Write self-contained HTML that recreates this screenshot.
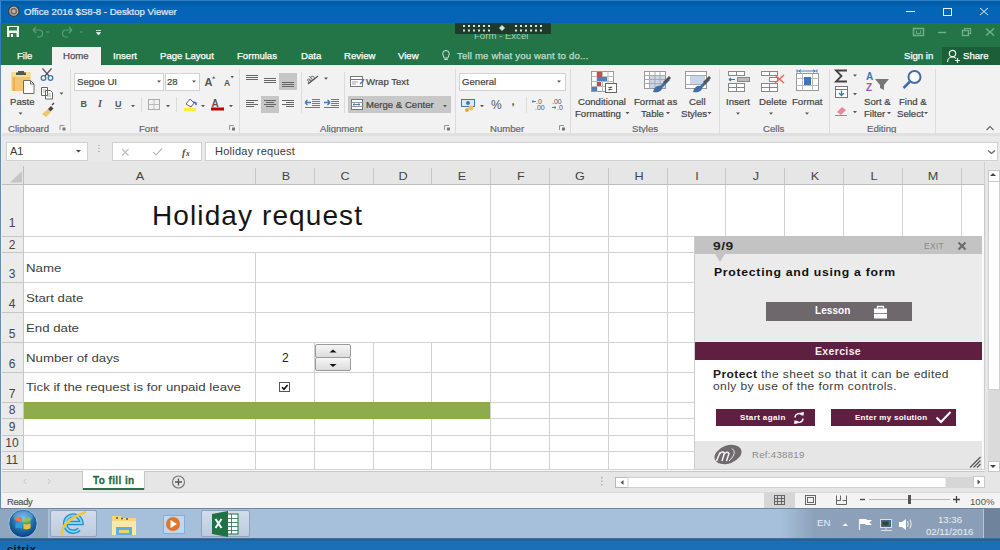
<!DOCTYPE html>
<html><head><meta charset="utf-8">
<style>
*{margin:0;padding:0;box-sizing:border-box}
html,body{width:1000px;height:550px;overflow:hidden;background:#fff;font-family:"Liberation Sans",sans-serif}
.a{position:absolute}
.t{position:absolute;white-space:nowrap;line-height:1}
svg{position:absolute;overflow:visible}
#title{left:0;top:0;width:1000px;height:23px;background:linear-gradient(#005ea8 0,#005ea8 3px,#0465b6 5px);border-top:1px solid #2f7fc8;border-left:1px solid #3f88d0}
#qat{left:0;top:23px;width:1000px;height:42px;background:#237548}
#ribbon{left:0;top:65px;width:1000px;height:68px;background:#f2f2f2}
#fbar{left:0;top:133px;width:1000px;height:29px;background:#e9e9e9;border-top:3px solid #e0e0e0}
#colhdr{left:0;top:162px;width:1000px;height:23px;background:#e6e6e6}
#grid{left:0;top:185px;width:1000px;height:286px;background:#fff}
#tabbar{left:0;top:471px;width:1000px;height:21px;background:#e6e6e6}
#status{left:0;top:493px;width:1000px;height:15px;background:#f3f3f3}
#taskbar{left:0;top:508px;width:1000px;height:30px;background:#a6c0dc}
#citrix{left:0;top:538px;width:1000px;height:12px;background:linear-gradient(#4f7fae 0,#2a5f95 1px,#2a5f95 2.5px,#2474b6 3px,#1470b6 4px,#1a6fb6 6px)}
.tab{color:#fff;font-size:9.6px;top:51.3px;-webkit-text-stroke:0.25px currentColor}
.rt{color:#444;font-size:9.6px;-webkit-text-stroke:0.2px currentColor}
.gl{color:#666;font-size:9.6px;top:124px;-webkit-text-stroke:0.2px currentColor}
.sep{position:absolute;width:1px;background:#dcdcdc;top:69px;height:64px}
.lbl{left:26px;font-size:10.5px;color:#404040;transform:scaleX(1.26);transform-origin:0 0}
.spin{left:315px;width:36px;height:14px;border:1px solid #9a9a9a;border-radius:2px;background:linear-gradient(#f6f6f6,#dcdcdc)}
</style></head><body>
<!-- TITLE BAR -->
<div id="title" class="a"></div>
<svg style="left:0;top:0" width="30" height="23"><circle cx="13.8" cy="11.2" r="5.2" fill="#b9b3ad" stroke="#3a3a3a" stroke-width="1.2"/><circle cx="13.8" cy="11.2" r="2.6" fill="none" stroke="#6b5e52" stroke-width="1.2"/></svg>
<div class="t" style="left:24px;top:6.6px;font-size:9.6px;color:#e2ecf8;-webkit-text-stroke:0.2px currentColor">Office 2016 $S8-8 - Desktop Viewer</div>
<svg style="left:900px;top:0" width="100" height="23">
 <line x1="6" y1="11.5" x2="15" y2="11.5" stroke="#e8f0fa" stroke-width="1"/>
 <rect x="43.5" y="8.5" width="8" height="7" fill="none" stroke="#e8f0fa" stroke-width="1"/>
 <path d="M80 8 L88 15 M88 8 L80 15" stroke="#e8f0fa" stroke-width="1"/>
</svg>

<!-- QAT + TABS -->
<div id="qat" class="a"></div>
<svg style="left:0;top:23px" width="110" height="20">
 <rect x="7" y="3" width="12" height="11" fill="#eef6f0"/>
 <rect x="9" y="4" width="8" height="3.5" fill="#2f7d52"/>
 <rect x="9.5" y="10" width="7" height="4" fill="#2f7d52"/>
 <rect x="11" y="11" width="2" height="3" fill="#eef6f0"/>
 <path d="M33 7 l3 -3 M33 7 l3 3 M33 7 h6 a3.5 3.5 0 0 1 0 7 h-2" fill="none" stroke="#5e9c78" stroke-width="1.2"/>
 <path d="M46 9 h3" stroke="#5e9c78" stroke-width="1"/>
 <path d="M72 7 l-3 -3 M72 7 l-3 3 M72 7 h-6 a3.5 3.5 0 0 0 0 7 h2" fill="none" stroke="#5e9c78" stroke-width="1.2"/>
 <path d="M80 9 h3" stroke="#5e9c78" stroke-width="1"/>
 <path d="M96 7.5 h5 M96.5 9.5 h4 l-2 2.5 z" fill="#e8f2ec" stroke="#e8f2ec" stroke-width="0.8"/>
</svg>
<div class="a" style="left:455px;top:23px;width:96px;height:11px;background:#1f3a2a;border-radius:1px"></div>
<div class="t" style="left:474px;top:31px;font-size:9.6px;color:#a6d2b4;clip-path:inset(3px 0 0 0)">Form - Excel</div>
<svg style="left:455px;top:23px" width="96" height="12">
 <g fill="#cfe3d6">
 <rect x="8" y="2" width="2" height="2"/><rect x="13" y="2" width="2" height="2"/><rect x="18" y="2" width="2" height="2"/><rect x="23" y="2" width="2" height="2"/><rect x="28" y="2" width="2" height="2"/><rect x="33" y="2" width="2" height="2"/>
 <rect x="8" y="6.5" width="2" height="2"/><rect x="13" y="6.5" width="2" height="2"/><rect x="18" y="6.5" width="2" height="2"/><rect x="23" y="6.5" width="2" height="2"/><rect x="28" y="6.5" width="2" height="2"/><rect x="33" y="6.5" width="2" height="2"/>
 <rect x="60" y="2" width="2" height="2"/><rect x="65" y="2" width="2" height="2"/><rect x="70" y="2" width="2" height="2"/><rect x="75" y="2" width="2" height="2"/><rect x="80" y="2" width="2" height="2"/><rect x="85" y="2" width="2" height="2"/>
 <rect x="60" y="6.5" width="2" height="2"/><rect x="65" y="6.5" width="2" height="2"/><rect x="70" y="6.5" width="2" height="2"/><rect x="75" y="6.5" width="2" height="2"/><rect x="80" y="6.5" width="2" height="2"/><rect x="85" y="6.5" width="2" height="2"/>
 <path d="M47 2 l3 3 l-3 3 l-3 -3 z"/>
 </g>
</svg>
<svg style="left:900px;top:23px" width="100" height="20">
 <rect x="13.5" y="5.5" width="10" height="7" fill="none" stroke="#72b08a" stroke-width="1.5"/>
 <path d="M16.5 7.5 v3 h4 v-3" fill="none" stroke="#72b08a" stroke-width="1"/>
 <line x1="38" y1="9.5" x2="46" y2="9.5" stroke="#72b08a" stroke-width="1.4"/>
 <rect x="62.5" y="7.5" width="6" height="5" fill="none" stroke="#72b08a" stroke-width="1.4"/>
 <path d="M64.5 7.5 v-2 h6 v5 h-2" fill="none" stroke="#72b08a" stroke-width="1.2"/>
 <path d="M86 5.5 L94 12.5 M94 5.5 L86 12.5" stroke="#72b08a" stroke-width="1.5"/>
</svg>

<div class="a" style="left:52px;top:47px;width:49px;height:18px;background:#f2f2f2"></div>
<div class="t tab" style="left:17px">File</div>
<div class="t tab" style="left:63px;color:#505050">Home</div>
<div class="t tab" style="left:113px">Insert</div>
<div class="t tab" style="left:160px">Page Layout</div>
<div class="t tab" style="left:237px">Formulas</div>
<div class="t tab" style="left:301px">Data</div>
<div class="t tab" style="left:344px">Review</div>
<div class="t tab" style="left:398px">View</div>
<svg style="left:440px;top:47px" width="14" height="18">
 <path d="M6 3.5 a3.3 3.3 0 0 1 3.3 3.3 c0 1.8 -1.4 2.4 -1.4 4.2 h-3.8 c0 -1.8 -1.4 -2.4 -1.4 -4.2 a3.3 3.3 0 0 1 3.3 -3.3 z M4.3 12.5 h3.4" fill="none" stroke="#d6e8dc" stroke-width="1"/>
</svg>
<div class="t tab" style="left:457px;color:#c3dccb;letter-spacing:0.17px">Tell me what you want to do...</div>
<div class="t tab" style="left:904px">Sign in</div>
<div class="a" style="left:942px;top:47px;width:58px;height:18px;background:#1b5e38"></div>
<svg style="left:945px;top:47px" width="18" height="18">
 <circle cx="7.5" cy="6.5" r="3.2" fill="none" stroke="#e8f2ec" stroke-width="1.2"/>
 <path d="M2.5 15 c0 -3 2.2 -5 5 -5 c1.5 0 2.6 0.5 3.4 1.3" fill="none" stroke="#e8f2ec" stroke-width="1.2"/>
 <path d="M12.5 11 v5 M10 13.5 h5" stroke="#e8f2ec" stroke-width="1.2"/>
</svg>
<div class="t tab" style="left:963px">Share</div>

<!-- RIBBON -->
<div id="ribbon" class="a"></div>

<!-- CLIPBOARD -->
<svg style="left:0;top:65px" width="70" height="70">
 <rect x="11.5" y="8" width="19" height="18" fill="#f4c56e"/>
 <rect x="11.5" y="7" width="19" height="5" fill="#f7dc96"/>
 <rect x="13" y="12" width="2" height="14" fill="#eeb050"/>
 <path d="M16 10 h10 v-2.5 h-2 v-1.5 h-6 v1.5 h-2 z" fill="#555"/>
 <path d="M23.5 15.5 h7 l3.5 3.5 v9.5 h-10.5 z" fill="#fffdf5" stroke="#6d6d6d" stroke-width="1"/>
 <path d="M30.5 15.5 v3.5 h3.5" fill="none" stroke="#6d6d6d" stroke-width="1"/>
 <g fill="none" stroke="#3d77b8" stroke-width="1.3"><circle cx="43.5" cy="13" r="2.3"/><circle cx="50.5" cy="13" r="2.3"/></g>
 <path d="M45 11 L51.5 3.5 M49 11 L42.5 3.5" stroke="#555" stroke-width="1.2"/>
 <path d="M41.5 22.5 h6 v8 h-6 z M45.5 25.5 h5 l2 2 v6.5 h-7 z" fill="#fff" stroke="#666" stroke-width="1"/>
 <path d="M43 25 h3 M43 27 h3 M47 29 h4 M47 31 h4" stroke="#888" stroke-width="0.7"/>
 <path d="M59.5 27.5 h4 l-2 2.2 z" fill="#555"/>
 <path d="M42 49 l6 -5 l3 3 l-5 5 z" fill="#f0c66c"/>
 <path d="M48 44 l3 -3 l2.5 2.5 l-3 3 z" fill="#444"/>
 <path d="M52 40 l2 -2" stroke="#444" stroke-width="1.5"/>
 <path d="M18.5 47.5 h4 l-2 2.2 z" fill="#555"/>
 <path d="M60.0 65 V60.5 H64.5" fill="none" stroke="#8a8a8a" stroke-width="0.9"/><rect x="62.5" y="62.5" width="3" height="3" fill="#777"/>
</svg>
<div class="t rt" style="left:10px;top:97px">Paste</div>
<div class="t gl" style="left:8px">Clipboard</div>
<div class="sep" style="left:70px"></div>

<!-- FONT -->
<div class="a" style="left:74px;top:73px;width:90px;height:18px;background:#fff;border:1px solid #d2d2d2"></div>
<div class="t rt" style="left:77px;top:77px">Segoe UI</div>
<div class="a" style="left:165px;top:73px;width:35px;height:18px;background:#fff;border:1px solid #d2d2d2"></div>
<div class="t rt" style="left:167px;top:77px">28</div>
<svg style="left:70px;top:65px" width="170" height="70">
 <path d="M87 15.5 h4 l-2 2.2 z M122 15.5 h4 l-2 2.2 z" fill="#555"/>
 <text x="134.5" y="21" font-family="Liberation Sans" font-weight="700" font-size="11" fill="#555">A</text>
 <path d="M142 13.5 l1.7 -2.2 l1.7 2.2 z" fill="#555"/>
 <text x="154" y="21" font-family="Liberation Sans" font-weight="700" font-size="8.5" fill="#555">A</text>
 <path d="M160.5 11 h3.4 l-1.7 2.2 z" fill="#555"/>
 <text x="10.5" y="42" font-family="Liberation Sans" font-weight="700" font-size="9" fill="#555">B</text>
 <text x="28" y="42" font-family="Liberation Serif" font-style="italic" font-weight="700" font-size="10" fill="#555">I</text>
 <text x="45" y="41.5" font-family="Liberation Sans" font-weight="700" font-size="9" fill="#555">U</text>
 <line x1="45" y1="43.5" x2="51.5" y2="43.5" stroke="#888" stroke-width="1"/>
 <path d="M61 40 h4 l-2 2.2 z M96 40 h4 l-2 2.2 z M131 40 h4 l-2 2.2 z M159 40 h4 l-2 2.2 z" fill="#555"/>
 <line x1="71.5" y1="32" x2="71.5" y2="47" stroke="#dcdcdc"/>
 <line x1="106.5" y1="32" x2="106.5" y2="47" stroke="#dcdcdc"/>
 <rect x="78.5" y="34.5" width="11" height="10" fill="none" stroke="#aaa" stroke-width="1"/>
 <path d="M84 34.5 v10 M78.5 39.5 h11" stroke="#bbb" stroke-width="1"/>
 <rect x="114" y="43" width="12" height="3" fill="#ffeb3b"/>
 <path d="M116 39 l4 -5 l4 4 l-3 4 z" fill="#fff" stroke="#666" stroke-width="1"/>
 <path d="M123 37 l3 1 v2" fill="none" stroke="#3a63c9" stroke-width="1.5"/>
 <rect x="141" y="42.5" width="13" height="3" fill="#c00000"/>
 <text x="141.5" y="42" font-family="Liberation Sans" font-weight="700" font-size="10" fill="#555">A</text>
 <path d="M159.5 65 V60.5 H164.0" fill="none" stroke="#8a8a8a" stroke-width="0.9"/><rect x="162.0" y="62.5" width="3" height="3" fill="#777"/>
</svg>
<div class="t gl" style="left:139px">Font</div>
<div class="sep" style="left:239px"></div>

<!-- ALIGNMENT -->
<div class="a" style="left:279px;top:73px;width:18px;height:17px;background:#c6c6c6"></div>
<div class="a" style="left:261px;top:96px;width:18px;height:17px;background:#c6c6c6"></div>
<div class="a" style="left:348px;top:96px;width:103px;height:17px;background:#c8c8c8"></div>
<svg style="left:240px;top:65px" width="220" height="70">
 <g stroke="#666" stroke-width="1">
 <path d="M6 10.5 h12 M6 12.5 h12 M6 14.5 h12"/>
 <path d="M24 13.5 h12 M24 15.5 h12 M24 17.5 h12"/>
 <path d="M42 17.5 h12 M42 19.5 h12 M42 21.5 h12"/>
 <path d="M6 35.5 h12 M6 37.5 h8 M6 39.5 h12 M6 41.5 h8"/>
 <path d="M24 35.5 h12 M26 37.5 h8 M24 39.5 h12 M26 41.5 h8"/>
 <path d="M42 35.5 h12 M46 37.5 h8 M42 39.5 h12 M46 41.5 h8"/>
 </g>
 <line x1="61.5" y1="7" x2="61.5" y2="48" stroke="#dcdcdc"/>
 <path d="M68 19 l10 -8" stroke="#555" stroke-width="1.3"/>
 <text x="66" y="17" font-family="Liberation Sans" font-size="8" fill="#555" transform="rotate(-40 70 14)">ab</text>
 <path d="M84 12.5 h4 l-2 2.2 z" fill="#555"/>
 <g stroke="#777" stroke-width="1"><path d="M72 34.5 h8 M72 36.5 h8 M72 38.5 h8 M72 40.5 h8 M65 42.5 h15"/><path d="M91 34.5 h8 M91 36.5 h8 M91 38.5 h8 M91 40.5 h8 M84 42.5 h15"/></g>
 <path d="M71 37.5 h-6 M65 37.5 l2.5 -2.5 M65 37.5 l2.5 2.5" stroke="#3d77b8" stroke-width="1.3" fill="none"/>
 <path d="M84 37.5 h6 M90 37.5 l-2.5 -2.5 M90 37.5 l-2.5 2.5" stroke="#3d77b8" stroke-width="1.3" fill="none"/>
 <line x1="104.5" y1="7" x2="104.5" y2="48" stroke="#dcdcdc"/>
 <rect x="110.5" y="11.5" width="12" height="10" fill="#fff" stroke="#777"/>
 <path d="M110.5 14.5 h12" stroke="#777"/>
 <path d="M112 17 h6 M112 19 h4" stroke="#888" stroke-width="0.8"/>
 <path d="M120 19 l3 -3 l1 -2" stroke="#3d77b8" stroke-width="1.3" fill="none"/>
 <rect x="111.5" y="34.5" width="11" height="10" fill="#fff" stroke="#777"/>
 <path d="M111.5 37.5 h11 M111.5 41.5 h11" stroke="#999"/>
 <path d="M113 39.5 h7 M113 39.5 l1.5 -1 M113 39.5 l1.5 1 M120 39.5 l-1.5 -1 M120 39.5 l-1.5 1" stroke="#3d77b8" stroke-width="0.9" fill="none"/>
 <path d="M203 40 h4 l-2 2.2 z" fill="#555"/>
 <path d="M204.5 65 V60.5 H209.0" fill="none" stroke="#8a8a8a" stroke-width="0.9"/><rect x="207.0" y="62.5" width="3" height="3" fill="#777"/>
</svg>
<div class="t rt" style="left:366px;top:77px">Wrap Text</div>
<div class="t rt" style="left:366px;top:100px">Merge &amp; Center</div>
<div class="t gl" style="left:320px">Alignment</div>
<div class="sep" style="left:455px"></div>

<!-- NUMBER -->
<div class="a" style="left:459px;top:73px;width:107px;height:18px;background:#fff;border:1px solid #d2d2d2"></div>
<div class="t rt" style="left:462px;top:77px">General</div>
<svg style="left:456px;top:65px" width="115" height="70">
 <path d="M101 15.5 h4 l-2 2.2 z M24 40 h4 l-2 2.2 z" fill="#555"/>
 <rect x="5.5" y="34.5" width="13" height="7" fill="#dfe9f5" stroke="#3d77b8"/>
 <circle cx="12" cy="38" r="2" fill="#3d77b8"/>
 <circle cx="15" cy="43" r="2.5" fill="#f0c060"/><circle cx="11" cy="45" r="2" fill="#e6a84a"/>
 <text x="35" y="44" font-family="Liberation Sans" font-size="12" fill="#555">%</text>
 <text x="55.5" y="40" font-family="Liberation Sans" font-weight="700" font-size="11" fill="#555">,</text>
 <line x1="70.5" y1="32" x2="70.5" y2="48" stroke="#dcdcdc"/>
 <text x="80" y="39" font-family="Liberation Sans" font-size="7" fill="#555">.0</text>
 <text x="79" y="45" font-family="Liberation Sans" font-size="7" fill="#555">.00</text>
 <path d="M76 36.5 h4 M76 36.5 l1.5 -1.2 M76 36.5 l1.5 1.2" stroke="#3d77b8" fill="none" stroke-width="0.9"/>
 <text x="96" y="39" font-family="Liberation Sans" font-size="7" fill="#555">.00</text>
 <text x="101" y="45" font-family="Liberation Sans" font-size="7" fill="#555">.0</text>
 <path d="M96 42.5 h4 M100 42.5 l-1.5 -1.2 M100 42.5 l-1.5 1.2" stroke="#3d77b8" fill="none" stroke-width="0.9"/>
 <path d="M103.5 65 V60.5 H108.0" fill="none" stroke="#8a8a8a" stroke-width="0.9"/><rect x="106.0" y="62.5" width="3" height="3" fill="#777"/>
</svg>
<div class="t gl" style="left:490px">Number</div>
<div class="sep" style="left:570px"></div>

<!-- STYLES -->
<svg style="left:571px;top:65px" width="150" height="70">
 <g fill="#fff" stroke="#999" stroke-width="1">
 <rect x="20.5" y="6.5" width="22" height="20"/>
 </g>
 <path d="M20.5 11.5 h22 M20.5 16.5 h22 M20.5 21.5 h22 M26 6.5 v20 M31.5 6.5 v20 M37 6.5 v20" stroke="#bbb" stroke-width="1"/>
 <rect x="26" y="7" width="5" height="5" fill="#c0504d"/>
 <rect x="26" y="12" width="10" height="4" fill="#4f81bd"/>
 <rect x="26" y="17" width="4" height="4" fill="#c0504d"/>
 <rect x="21" y="22" width="5" height="4" fill="#4f81bd"/>
 <rect x="34.5" y="18.5" width="11" height="9" fill="#fff" stroke="#666"/>
 <text x="37" y="26" font-family="Liberation Sans" font-size="8" fill="#444">≠</text>
 <rect x="73.5" y="6.5" width="21" height="17" fill="#fff" stroke="#999"/>
 <rect x="79" y="11" width="15" height="12" fill="#c9d5e8"/>
 <path d="M73.5 10.5 h21 M73.5 14.5 h21 M73.5 18.5 h21 M78.5 6.5 v17 M84 6.5 v17 M89 6.5 v17" stroke="#aaa" stroke-width="1"/>
 <path d="M83 24 c2 -3 4 -4 6 -3 l8 -8 l2 2 l-8 8 c0 3 -4 5 -9 4 z" fill="#3f6ea3"/>
 <path d="M92 17 l6 -6 l2 2 l-6 6 z" fill="#555"/>
 <rect x="114.5" y="6.5" width="21" height="17" fill="#fff" stroke="#999"/>
 <rect x="119" y="10" width="15" height="9" fill="#c9d5e8"/>
 <path d="M114.5 10.5 h21 M114.5 19.5 h21" stroke="#aaa" stroke-width="1"/>
 <path d="M123 24 c2 -3 4 -4 6 -3 l8 -8 l2 2 l-8 8 c0 3 -4 5 -9 4 z" fill="#3f6ea3"/>
 <path d="M132 17 l6 -6 l2 2 l-6 6 z" fill="#555"/>
 <path d="M54.5 47 h4 l-2 2.2 z M95 47 h4 l-2 2.2 z M136.5 47 h4 l-2 2.2 z" fill="#555"/>
</svg>
<div class="t rt" style="left:578px;top:97px">Conditional</div>
<div class="t rt" style="left:575px;top:109px">Formatting</div>
<div class="t rt" style="left:634px;top:97px">Format as</div>
<div class="t rt" style="left:641px;top:109px">Table</div>
<div class="t rt" style="left:689px;top:97px">Cell</div>
<div class="t rt" style="left:681px;top:109px">Styles</div>
<div class="t gl" style="left:632px">Styles</div>
<div class="sep" style="left:719px"></div>

<!-- CELLS -->
<svg style="left:720px;top:65px" width="110" height="70">
 <g fill="#fff" stroke="#888" stroke-width="1">
 <rect x="8.5" y="6.5" width="8" height="4"/><rect x="16.5" y="6.5" width="8" height="4"/>
 <rect x="8.5" y="18.5" width="8" height="4"/><rect x="8.5" y="22.5" width="8" height="4"/><rect x="16.5" y="18.5" width="8" height="4"/><rect x="16.5" y="22.5" width="8" height="4"/>
 </g>
 <rect x="17.5" y="12.5" width="12" height="4" fill="#bbb" stroke="#888"/>
 <path d="M9 14.5 h6 M9 14.5 l2 -1.5 M9 14.5 l2 1.5" stroke="#3d77b8" stroke-width="1.2" fill="none"/>
 <g fill="#fff" stroke="#888" stroke-width="1">
 <rect x="41.5" y="6.5" width="8" height="4"/><rect x="49.5" y="6.5" width="8" height="4"/>
 <rect x="41.5" y="18.5" width="8" height="4"/><rect x="41.5" y="22.5" width="8" height="4"/><rect x="49.5" y="18.5" width="8" height="4"/><rect x="49.5" y="22.5" width="8" height="4"/>
 <rect x="49.5" y="12.5" width="8" height="4"/>
 </g>
 <path d="M55 10 L64 18 M64 10 L55 18" stroke="#e06a5a" stroke-width="1.5"/>
 <rect x="76.5" y="8.5" width="22" height="17" fill="#fff" stroke="#999"/>
 <path d="M76.5 13.5 h22 M76.5 20.5 h22 M82.5 8.5 v17 M92.5 8.5 v17" stroke="#bbb"/>
 <rect x="84" y="12" width="7" height="8" fill="#3d77b8"/>
 <path d="M77 6 h20 M77 4.5 v3 M97 4.5 v3 M79 6 l2 -1.5 M79 6 l2 1.5 M95 6 l-2 -1.5 M95 6 l-2 1.5" stroke="#3d77b8" stroke-width="0.9" fill="none"/>
 <path d="M16 47.5 h4 l-2 2.2 z M49 47.5 h4 l-2 2.2 z M85 47.5 h4 l-2 2.2 z" fill="#555"/>
</svg>
<div class="t rt" style="left:726px;top:97px">Insert</div>
<div class="t rt" style="left:759px;top:97px">Delete</div>
<div class="t rt" style="left:792px;top:97px">Format</div>
<div class="t gl" style="left:763px">Cells</div>
<div class="sep" style="left:829px"></div>

<!-- EDITING -->
<svg style="left:830px;top:65px" width="110" height="70">
 <path d="M17 5.5 h-11 l5.5 5.5 l-5.5 5.5 h11" fill="none" stroke="#444" stroke-width="1.8"/>
 <path d="M23 9.5 h4 l-2 2.2 z M23 28 h4 l-2 2.2 z M23 46 h4 l-2 2.2 z" fill="#555"/>
 <rect x="5.5" y="21.5" width="12" height="11" fill="#fff" stroke="#777"/>
 <path d="M5.5 24.5 h12" stroke="#777"/>
 <path d="M11.5 25.5 v5 M9 28 l2.5 2.5 l2.5 -2.5" stroke="#3d77b8" stroke-width="1.3" fill="none"/>
 <path d="M7 47 l5 -5 l4 3 l-5 5 z" fill="#e88a9a"/>
 <path d="M5 50.5 h12" stroke="#e06a7a" stroke-width="1"/>
 <text x="36" y="15" font-family="Liberation Sans" font-weight="700" font-size="10" fill="#3d77b8">A</text>
 <text x="36" y="26" font-family="Liberation Sans" font-weight="700" font-size="10" fill="#9b59b6">Z</text>
 <path d="M45 14 h14 l-5 6 v5 l-4 -2 v-3 z" fill="#777"/>
 <circle cx="84.5" cy="12" r="6" fill="#fff" stroke="#3f6ea3" stroke-width="2"/>
 <path d="M80 16.5 l-6.5 6.5" stroke="#3f6ea3" stroke-width="2.5"/>
 <path d="M57 47 h4 l-2 2.2 z M94 47 h4 l-2 2.2 z" fill="#555"/>
</svg>
<div class="t rt" style="left:864px;top:97px">Sort &amp;</div>
<div class="t rt" style="left:864px;top:109px">Filter</div>
<div class="t rt" style="left:899px;top:97px">Find &amp;</div>
<div class="t rt" style="left:897px;top:109px">Select</div>
<div class="t gl" style="left:867px">Editing</div>
<div class="sep" style="left:935px"></div>
<svg style="left:980px;top:120px" width="20" height="14"><path d="M6.5 10 l3.5 -3.5 l3.5 3.5" fill="none" stroke="#666" stroke-width="1.1"/></svg>

<!-- FORMULA BAR -->
<div id="fbar" class="a"></div>
<div class="a" style="left:6px;top:142px;width:82px;height:19px;background:#fff;border:1px solid #d0d0d0"></div>
<div class="t" style="left:10px;top:146.2px;font-size:11px;color:#3a3a3a">A1</div>
<div class="a" style="left:112px;top:142px;width:90px;height:19px;background:#fff;border:1px solid #d0d0d0"></div>
<div class="a" style="left:205px;top:142px;width:793px;height:19px;background:#fff;border:1px solid #d0d0d0"></div>
<div class="t" style="left:215px;top:146.2px;font-size:11px;color:#3a3a3a;letter-spacing:0.25px">Holiday request</div>
<svg style="left:0;top:134px" width="1000" height="28">
 <path d="M76 16 h5 l-2.5 2.5 z" fill="#444"/>
 <g fill="#bbb"><rect x="98" y="11" width="2" height="1"/><rect x="98" y="14" width="2" height="1"/><rect x="98" y="17" width="2" height="1"/></g>
 <path d="M122 15 l6.5 6.5 M128.5 15 l-6.5 6.5" stroke="#bbb" stroke-width="1.1"/>
 <path d="M153 18 l3 3 l6 -6.5" fill="none" stroke="#bbb" stroke-width="1.2"/>
 <text x="182" y="21.5" font-family="Liberation Serif" font-style="italic" font-weight="700" font-size="10.5" fill="#555">f</text>
 <text x="186" y="22" font-family="Liberation Serif" font-style="italic" font-weight="700" font-size="7.5" fill="#444">x</text>
 <path d="M988 16.5 l3.5 3 l3.5 -3" fill="none" stroke="#666" stroke-width="1.3"/>
</svg>

<!-- COLUMN HEADER -->
<div id="colhdr" class="a"></div>
<svg style="left:0;top:162px" width="1000" height="24">
 <path d="M10 20.5 L22 9 V20.5 Z" fill="#c4c4c4"/>
 <line x1="0" y1="22.5" x2="985" y2="22.5" stroke="#bdbdbd"/>
 <line x1="23.5" y1="4" x2="23.5" y2="23" stroke="#bdbdbd"/>
 <line x1="255.5" y1="6" x2="255.5" y2="22" stroke="#c6c6c6"/>
 <line x1="314.5" y1="6" x2="314.5" y2="22" stroke="#c6c6c6"/>
 <line x1="373.5" y1="6" x2="373.5" y2="22" stroke="#c6c6c6"/>
 <line x1="431.5" y1="6" x2="431.5" y2="22" stroke="#c6c6c6"/>
 <line x1="490.5" y1="6" x2="490.5" y2="22" stroke="#c6c6c6"/>
 <line x1="549.5" y1="6" x2="549.5" y2="22" stroke="#c6c6c6"/>
 <line x1="608.5" y1="6" x2="608.5" y2="22" stroke="#c6c6c6"/>
 <line x1="667.5" y1="6" x2="667.5" y2="22" stroke="#c6c6c6"/>
 <line x1="725.5" y1="6" x2="725.5" y2="22" stroke="#c6c6c6"/>
 <line x1="784.5" y1="6" x2="784.5" y2="22" stroke="#c6c6c6"/>
 <line x1="843.5" y1="6" x2="843.5" y2="22" stroke="#c6c6c6"/>
 <line x1="902.5" y1="6" x2="902.5" y2="22" stroke="#c6c6c6"/>
 <line x1="961.5" y1="6" x2="961.5" y2="22" stroke="#c6c6c6"/>
 <line x1="984.5" y1="0" x2="984.5" y2="24" stroke="#d0d0d0"/>
</svg>
<div class="t" style="left:120.0px;width:40px;text-align:center;top:171.4px;font-size:11px;color:#444;transform:scaleX(1.15)">A</div>
<div class="t" style="left:265.5px;width:40px;text-align:center;top:171.4px;font-size:11px;color:#444;transform:scaleX(1.15)">B</div>
<div class="t" style="left:324.5px;width:40px;text-align:center;top:171.4px;font-size:11px;color:#444;transform:scaleX(1.15)">C</div>
<div class="t" style="left:383.0px;width:40px;text-align:center;top:171.4px;font-size:11px;color:#444;transform:scaleX(1.15)">D</div>
<div class="t" style="left:441.5px;width:40px;text-align:center;top:171.4px;font-size:11px;color:#444;transform:scaleX(1.15)">E</div>
<div class="t" style="left:500.5px;width:40px;text-align:center;top:171.4px;font-size:11px;color:#444;transform:scaleX(1.15)">F</div>
<div class="t" style="left:559.5px;width:40px;text-align:center;top:171.4px;font-size:11px;color:#444;transform:scaleX(1.15)">G</div>
<div class="t" style="left:618.5px;width:40px;text-align:center;top:171.4px;font-size:11px;color:#444;transform:scaleX(1.15)">H</div>
<div class="t" style="left:677.0px;width:40px;text-align:center;top:171.4px;font-size:11px;color:#444;transform:scaleX(1.15)">I</div>
<div class="t" style="left:735.5px;width:40px;text-align:center;top:171.4px;font-size:11px;color:#444;transform:scaleX(1.15)">J</div>
<div class="t" style="left:794.5px;width:40px;text-align:center;top:171.4px;font-size:11px;color:#444;transform:scaleX(1.15)">K</div>
<div class="t" style="left:853.5px;width:40px;text-align:center;top:171.4px;font-size:11px;color:#444;transform:scaleX(1.15)">L</div>
<div class="t" style="left:912.5px;width:40px;text-align:center;top:171.4px;font-size:11px;color:#444;transform:scaleX(1.15)">M</div>

<!-- GRID -->
<div id="grid" class="a"></div>
<div class="a" style="left:984px;top:185px;width:1px;height:286px;background:#c8c8c8"></div>
<div class="a" style="left:0;top:185px;width:24px;height:286px;background:#ebebeb"></div>
<svg style="left:0;top:0" width="1000" height="550">
 <g stroke="#d2d2d2" stroke-width="1">
  <line x1="24" y1="236.5" x2="984" y2="236.5"/>
  <line x1="24" y1="252.5" x2="984" y2="252.5"/>
  <line x1="24" y1="282.5" x2="984" y2="282.5"/>
  <line x1="24" y1="312.5" x2="984" y2="312.5"/>
  <line x1="24" y1="342.5" x2="984" y2="342.5"/>
  <line x1="24" y1="372.5" x2="984" y2="372.5"/>
  <line x1="24" y1="402.5" x2="984" y2="402.5"/>
  <line x1="24" y1="418.5" x2="984" y2="418.5"/>
  <line x1="24" y1="435.5" x2="984" y2="435.5"/>
  <line x1="24" y1="451.5" x2="984" y2="451.5"/>
  <line x1="24" y1="469.5" x2="984" y2="469.5"/>
  <line x1="490.5" y1="185" x2="490.5" y2="469"/>
  <line x1="549.5" y1="185" x2="549.5" y2="469"/>
  <line x1="608.5" y1="185" x2="608.5" y2="469"/>
  <line x1="667.5" y1="185" x2="667.5" y2="469"/>
  <line x1="725.5" y1="185" x2="725.5" y2="469"/>
  <line x1="784.5" y1="185" x2="784.5" y2="469"/>
  <line x1="843.5" y1="185" x2="843.5" y2="469"/>
  <line x1="902.5" y1="185" x2="902.5" y2="469"/>
  <line x1="961.5" y1="185" x2="961.5" y2="469"/>
  <line x1="255.5" y1="252" x2="255.5" y2="469"/>
  <line x1="314.5" y1="342" x2="314.5" y2="469"/>
  <line x1="373.5" y1="342" x2="373.5" y2="469"/>
  <line x1="431.5" y1="342" x2="431.5" y2="469"/>
 </g>
 <g stroke="#c6c6c6"><line x1="23.5" y1="185" x2="23.5" y2="471"/>
  <line x1="0" y1="236.5" x2="23" y2="236.5"/>
  <line x1="0" y1="252.5" x2="23" y2="252.5"/>
  <line x1="0" y1="282.5" x2="23" y2="282.5"/>
  <line x1="0" y1="312.5" x2="23" y2="312.5"/>
  <line x1="0" y1="342.5" x2="23" y2="342.5"/>
  <line x1="0" y1="372.5" x2="23" y2="372.5"/>
  <line x1="0" y1="402.5" x2="23" y2="402.5"/>
  <line x1="0" y1="418.5" x2="23" y2="418.5"/>
  <line x1="0" y1="435.5" x2="23" y2="435.5"/>
  <line x1="0" y1="451.5" x2="23" y2="451.5"/>
  <line x1="0" y1="469.5" x2="23" y2="469.5"/>
 </g>
</svg>
<div class="t" style="left:0;width:24px;text-align:center;top:216.84px;font-size:12px;color:#444">1</div>
<div class="t" style="left:0;width:24px;text-align:center;top:239.34px;font-size:12px;color:#444">2</div>
<div class="t" style="left:0;width:24px;text-align:center;top:268.34px;font-size:12px;color:#444">3</div>
<div class="t" style="left:0;width:24px;text-align:center;top:298.34px;font-size:12px;color:#444">4</div>
<div class="t" style="left:0;width:24px;text-align:center;top:328.34px;font-size:12px;color:#444">5</div>
<div class="t" style="left:0;width:24px;text-align:center;top:358.34px;font-size:12px;color:#444">6</div>
<div class="t" style="left:0;width:24px;text-align:center;top:387.84px;font-size:12px;color:#444">7</div>
<div class="t" style="left:0;width:24px;text-align:center;top:404.34px;font-size:12px;color:#444">8</div>
<div class="t" style="left:0;width:24px;text-align:center;top:420.84px;font-size:12px;color:#444">9</div>
<div class="t" style="left:0;width:24px;text-align:center;top:437.34px;font-size:12px;color:#444">10</div>
<div class="t" style="left:0;width:24px;text-align:center;top:453.84px;font-size:12px;color:#444">11</div>

<!-- CELL CONTENT -->
<div class="a" style="left:24px;top:402px;width:466px;height:17px;background:#8fac4c"></div>
<div class="t" style="left:152px;top:202.3px;font-size:28px;letter-spacing:1.1px;color:#151515">Holiday request</div>
<div class="t lbl" style="top:263.1px">Name</div>
<div class="t lbl" style="top:293.1px">Start date</div>
<div class="t lbl" style="top:323.1px">End date</div>
<div class="t lbl" style="top:352.6px">Number of days</div>
<div class="t lbl" style="top:382.3px">Tick if the request is for unpaid leave</div>
<div class="t" style="left:282px;top:351.6px;font-size:12px;color:#222">2</div>
<div class="a spin" style="top:344px"></div>
<div class="a spin" style="top:357px"></div>
<svg style="left:315px;top:344px" width="36" height="29">
 <path d="M14.5 8.5 h7 l-3.5 -3 z" fill="#111"/>
 <path d="M14.5 20 h7 l-3.5 3 z" fill="#111"/>
</svg>
<div class="a" style="left:279px;top:382px;width:11px;height:10px;border:1.5px solid #555;background:#fff"></div>
<svg style="left:279px;top:382px" width="12" height="11"><path d="M3 5.2 l2 2 l3.6 -4.2" fill="none" stroke="#111" stroke-width="1.6"/></svg>

<!-- LESSON PANEL -->
<div class="a" style="left:694px;top:236px;width:291px;height:234px;background:#fafafa;border:1px solid #cdcdcd;border-top:none"></div>
<div class="a" style="left:695px;top:236px;width:287px;height:18px;background:#c3c3c3"></div>
<div class="a" style="left:695px;top:254px;width:287px;height:88px;background:#ebebeb"></div>
<svg style="left:695px;top:254px" width="40" height="10"><path d="M20 0 h10 l-5 8 z" fill="#c3c3c3"/></svg>
<div class="t" style="left:712.5px;top:241.5px;font-size:10px;font-weight:700;color:#222;letter-spacing:0.4px;transform:scaleX(1.38);transform-origin:0 0">9/9</div>
<div class="t" style="left:924px;top:242px;font-size:8.5px;color:#8a8a8a;letter-spacing:0.3px">EXIT</div>
<svg style="left:955px;top:240px" width="14" height="12"><path d="M3.5 2.5 L10.5 9.5 M10.5 2.5 L3.5 9.5" stroke="#6a6a6a" stroke-width="2"/></svg>
<div class="t" style="left:714px;top:267.5px;font-size:10.2px;font-weight:700;color:#111;letter-spacing:0.6px;transform:scaleX(1.2);transform-origin:0 0">Protecting and using a form</div>
<div class="a" style="left:766px;top:302px;width:146px;height:19px;background:#6e686c"></div>
<div class="t" style="left:815px;top:305.8px;font-size:10px;font-weight:700;color:#fff;letter-spacing:0.05px">Lesson</div>
<svg style="left:872px;top:304px" width="18" height="16">
 <path d="M5.5 4.5 v-2 h6 v2" fill="none" stroke="#fff" stroke-width="1.3"/>
 <rect x="2" y="4.5" width="13" height="10" fill="#fff"/>
 <path d="M2 9.5 h13" stroke="#6e686c" stroke-width="0.8"/>
</svg>
<div class="a" style="left:695px;top:342px;width:287px;height:18px;background:#5f1f40"></div>
<div class="t" style="left:815px;top:345.5px;font-size:10.5px;font-weight:700;color:#f4eef1;letter-spacing:0.35px">Exercise</div>
<div class="a" style="left:695px;top:360px;width:287px;height:81px;background:#fff"></div>
<div class="t" style="left:713px;top:369px;font-size:10.2px;color:#3a3a3a;letter-spacing:0.35px;line-height:12.2px;transform:scaleX(1.18);transform-origin:0 0">
<b style="color:#1a1a1a">Protect</b> the sheet so that it can be edited<br>only by use of the form controls.</div>
<div class="a" style="left:716px;top:409px;width:99px;height:17px;background:#5f1f40"></div>
<div class="t" style="left:740px;top:413.7px;font-size:8px;font-weight:700;color:#fff;letter-spacing:0.4px">Start again</div>
<svg style="left:792px;top:411px" width="14" height="14">
 <path d="M3 6.5 a4 4 0 0 1 7 -2.5 M11 7.5 a4 4 0 0 1 -7 2.5" fill="none" stroke="#fff" stroke-width="1.5"/>
 <path d="M8.5 2 l2.5 2.5 l0.5 -3 z M5.5 12 l-2.5 -2.5 l-0.5 3 z" fill="#fff" stroke="#fff" stroke-width="0.8"/>
</svg>
<div class="a" style="left:831px;top:409px;width:125px;height:17px;background:#5f1f40"></div>
<div class="t" style="left:855px;top:413.7px;font-size:8px;font-weight:700;color:#fff;letter-spacing:0.28px">Enter my solution</div>
<svg style="left:935px;top:410px" width="18" height="16"><path d="M1.5 7.5 l4.5 4.5 l9.5 -10" fill="none" stroke="#fff" stroke-width="2"/></svg>
<div class="a" style="left:695px;top:441px;width:287px;height:28px;background:#e6e6e6"></div>
<svg style="left:712px;top:444px" width="32" height="22">
 <ellipse cx="16" cy="10.5" rx="14" ry="9" transform="rotate(-20 16 10.5)" fill="#6e6a6e"/>
 <path d="M4.5 17 L8 8.5 M7.5 10 q3 -3.5 5 -1 L10 17 M11.5 11 q3 -4.5 5.5 -1.5 L14.5 17" fill="none" stroke="#f4f4f4" stroke-width="1.5"/>
 <path d="M20 4.5 q6 4 -3 12.5" fill="none" stroke="#f4f4f4" stroke-width="0.9"/>
</svg>
<div class="t" style="left:752px;top:450px;font-size:9.6px;color:#8a8a8a;letter-spacing:0.3px">Ref:438819</div>
<svg style="left:968px;top:456px" width="14" height="12"><path d="M2 11.5 L12.5 1 M5.5 11.5 L12.5 4.5 M9 11.5 L12.5 8" stroke="#555" stroke-width="1.2"/></svg>

<!-- SHEET TABS -->
<div id="tabbar" class="a"></div>
<div class="a" style="left:0;top:470px;width:985px;height:2px;background:#f8f8f8;border-bottom:1px solid #c8c8c8"></div>
<div class="a" style="left:0;top:492px;width:1000px;height:1px;background:#d8d8d8"></div>
<div class="a" style="left:82px;top:471px;width:63px;height:19px;background:#fff;border-left:1px solid #c6c6c6;border-right:1px solid #c6c6c6"></div>
<div class="a" style="left:83px;top:487.5px;width:61px;height:2px;background:#2a6e4a"></div>
<div class="t" style="left:93px;top:476px;font-size:10px;font-weight:700;color:#276b47;letter-spacing:0.4px;-webkit-text-stroke:0.3px currentColor">To fill in</div>
<svg style="left:0;top:471px" width="1000" height="22">
 <path d="M26 8 l-2 2.5 l2 2.5 M48 8 l2 2.5 l-2 2.5" fill="none" stroke="#c4c4c4" stroke-width="1"/>
 <circle cx="178.5" cy="11" r="6" fill="none" stroke="#777" stroke-width="1.1"/>
 <path d="M178.5 7.5 v7 M175 11 h7" stroke="#555" stroke-width="1.3"/>
 <g fill="#b0b0b0"><rect x="601" y="6" width="1.5" height="1.5"/><rect x="601" y="9.5" width="1.5" height="1.5"/><rect x="601" y="13" width="1.5" height="1.5"/></g>
 <rect x="615.5" y="6.5" width="13" height="10" fill="#fff" stroke="#b8b8b8"/>
 <path d="M623.5 9 v5 l-3 -2.5 z" fill="#555"/>
 <rect x="628" y="6.5" width="318" height="10" fill="#fff" stroke="#d0d0d0"/>
 <rect x="946" y="6" width="27" height="11" fill="#d6d6d6"/>
 <rect x="973.5" y="5.5" width="11" height="11" fill="#fff" stroke="#c8c8c8"/>
 <path d="M977.5 8.5 v5 l3 -2.5 z" fill="#555"/>
</svg>

<!-- VERTICAL SCROLLBAR -->
<div class="a" style="left:985px;top:162px;width:15px;height:309px;background:#e6e6e6"></div>
<div class="a" style="left:988px;top:170px;width:12px;height:220px;background:#fff;border:1px solid #d0d0d0"></div>
<div class="a" style="left:988px;top:390px;width:12px;height:71px;background:#dadada"></div>
<div class="a" style="left:988px;top:170px;width:12px;height:12px;background:#fff;border:1px solid #c8c8c8"></div>
<div class="a" style="left:988px;top:461px;width:12px;height:11px;background:#fff;border:1px solid #c8c8c8"></div>
<svg style="left:985px;top:162px" width="15" height="312">
 <path d="M5 14 h6 l-3 -3 z" fill="#444"/>
 <path d="M5 303 h6 l-3 3 z" fill="#444"/>
</svg>

<!-- STATUS BAR -->
<div id="status" class="a"></div>
<div class="t" style="left:7px;top:496.8px;font-size:9.4px;color:#555;letter-spacing:-0.35px;-webkit-text-stroke:0.2px currentColor">Ready</div>
<div class="a" style="left:764px;top:493px;width:31px;height:15px;background:#d6d6d6"></div>
<svg style="left:0;top:492px" width="1000" height="16">
 <g fill="none" stroke="#666" stroke-width="1">
  <rect x="774.5" y="3.5" width="10" height="9"/><path d="M774.5 6.5 h10 M774.5 9.5 h10 M777.5 3.5 v9 M781.5 3.5 v9"/>
  <rect x="805.5" y="3.5" width="10" height="9"/><rect x="807.5" y="5.5" width="6" height="5"/>
  <path d="M836.5 3.5 v9 h10 v-9 M836.5 8.5 h4 v-5 M846.5 8.5 h-4"/>
 </g>
 <path d="M860 7.5 h5" stroke="#444" stroke-width="1.3"/>
 <path d="M869 7.5 h81" stroke="#b8b8b8" stroke-width="1"/>
 <rect x="908" y="3" width="3" height="9" fill="#555"/>
 <path d="M953 7.5 h7 M956.5 4 v7" stroke="#444" stroke-width="1.3"/>
</svg>
<div class="t" style="left:970px;top:496.5px;font-size:9.6px;color:#555">100%</div>

<!-- TASKBAR -->
<div id="taskbar" class="a"></div>
<div class="a" style="left:0;top:508px;width:1000px;height:1px;background:#6d87a3"></div>
<div class="a" style="left:0;top:509px;width:48px;height:29px;background:#8ea6c0"></div>
<div class="a" style="left:50px;top:510px;width:47px;height:27px;background:linear-gradient(#d3dcea,#bccbdd);border:1px solid #8fa3ba;border-radius:2px"></div>
<div class="a" style="left:201px;top:510px;width:49px;height:27px;background:linear-gradient(#d3dcea,#bccbdd);border:1px solid #8fa3ba;border-radius:2px"></div>
<div class="a" style="left:780px;top:509px;width:203px;height:29px;background:linear-gradient(90deg,#a6c0dc,#8da2ba 17%,#8a9fb7)"></div>
<div class="a" style="left:983px;top:509px;width:17px;height:29px;background:#6f849c;border-left:1px solid #b8c6d6"></div>
<svg style="left:0;top:508px" width="1000" height="30">
 <defs>
  <radialGradient id="orb" cx="50%" cy="35%" r="65%"><stop offset="0" stop-color="#5fb6e8"/><stop offset="0.6" stop-color="#1d6aa8"/><stop offset="1" stop-color="#0b3f73"/></radialGradient>
 </defs>
 <circle cx="23" cy="15.5" r="14.2" fill="url(#orb)" stroke="#a9cbe6" stroke-width="0.9"/>
 <path d="M15.5 9.5 q3 -1.5 6.5 0 v5 q-3.5 -1.5 -6.5 0 z" fill="#d9582e"/>
 <path d="M23.5 9.8 q3.5 1.5 7 -0.5 v5 q-3.5 2 -7 0.5 z" fill="#6fb33e"/>
 <path d="M15.5 15.5 q3 -1.5 6.5 0 v5 q-3.5 -1.5 -6.5 0 z" fill="#3a9ad8"/>
 <path d="M23.5 15.8 q3.5 1.5 7 -0.5 v5 q-3.5 2 -7 0.5 z" fill="#e9c23a"/>
 <ellipse cx="23" cy="8.5" rx="10" ry="5.5" fill="#fff" opacity="0.2"/>
 <path d="M65.5 15 h16 a8.2 8.2 0 1 0 -2.4 6.4" fill="none" stroke="#1f8fce" stroke-width="4.4"/>
 <path d="M65.5 15 h16 a8.2 8.2 0 1 0 -2.4 6.4" fill="none" stroke="#7fd3f3" stroke-width="1.8"/>
 <path d="M62 27 q-1.5 -14 24 -23" fill="none" stroke="#efc64c" stroke-width="2.8"/>
 <path d="M112 8 h9 l2 2 h13 v17 h-24 z" fill="#f4d678"/>
 <path d="M112 13 h24 v14 h-24 z" fill="#f9e9a8"/>
 <path d="M116 19 h16 v8 h-16 z" fill="#5bb0e0"/>
 <path d="M119 22 h10 v3 h-10 z" fill="#f2d070"/>
 <g fill="#555"><circle cx="117" cy="10" r="1"/><circle cx="122" cy="10.5" r="1"/><circle cx="127" cy="11" r="1"/></g>
 <rect x="163.5" y="7.5" width="21" height="18" fill="#bcd9f2" stroke="#7fb1dc" stroke-width="1"/>
 <circle cx="173" cy="16" r="7" fill="#e2752c"/>
 <path d="M170.5 12 v8 l6.5 -4 z" fill="#fff"/>
 <rect x="226" y="6" width="12" height="20" fill="#fff" stroke="#207245" stroke-width="1"/>
 <path d="M226 10.5 h12 M226 14.5 h12 M226 18.5 h12 M226 22.5 h12 M231.5 6 v20" stroke="#207245" stroke-width="0.8"/>
 <path d="M212 6 l16 -3 v26 l-16 -3 z" fill="#1f7244"/>
 <path d="M215.5 11 l6 9 M221.5 11 l-6 9" stroke="#fff" stroke-width="2"/>
 <text x="817" y="18" font-family="Liberation Sans" font-size="9.6" fill="#e8eef5">EN</text>
 <path d="M842.5 18 h5.5 l-2.75 -2.75 z" fill="#fff"/>
 <path d="M859.5 11 v11" stroke="#eee" stroke-width="1.2"/>
 <path d="M860 11 h6 l1 1 h5 l-2.5 2.5 l2.5 2.5 h-6 l-1 -1 h-5 z" fill="#fff"/>
 <rect x="880.5" y="11.5" width="11" height="8" fill="#4a6a8a" stroke="#e0e0e0"/>
 <rect x="882.5" y="13.5" width="6" height="4" fill="#2e4a2a"/>
 <path d="M881 22.5 h11 M886 19.5 v3" stroke="#e0e0e0" stroke-width="1"/>
 <path d="M899 14 h3 l4 -3 v11 l-4 -3 h-3 z" fill="#fff"/>
 <path d="M907.5 13 q1.5 3 0 6 M910 11.5 q2.5 4.5 0 9" fill="none" stroke="#eee" stroke-width="1"/>
 <text x="938" y="14.5" font-family="Liberation Sans" font-size="9.6" fill="#e8eef5">13:36</text>
 <text x="926" y="26.8" font-family="Liberation Sans" font-size="9.6" fill="#e8eef5">02/11/2016</text>
</svg>

<!-- CITRIX STRIP -->
<div id="citrix" class="a"></div>
<div class="t" style="left:7px;top:544px;font-size:11px;font-weight:700;color:#111;letter-spacing:0.5px">citrix</div>
<div class="a" style="left:0;top:23px;width:1px;height:42px;background:#2f78c4"></div>
<div class="a" style="left:0;top:65px;width:1px;height:443px;background:#6a8cad"></div>
<div class="a" style="left:1px;top:65px;width:1px;height:443px;background:#e4f0fb"></div>
</body></html>
